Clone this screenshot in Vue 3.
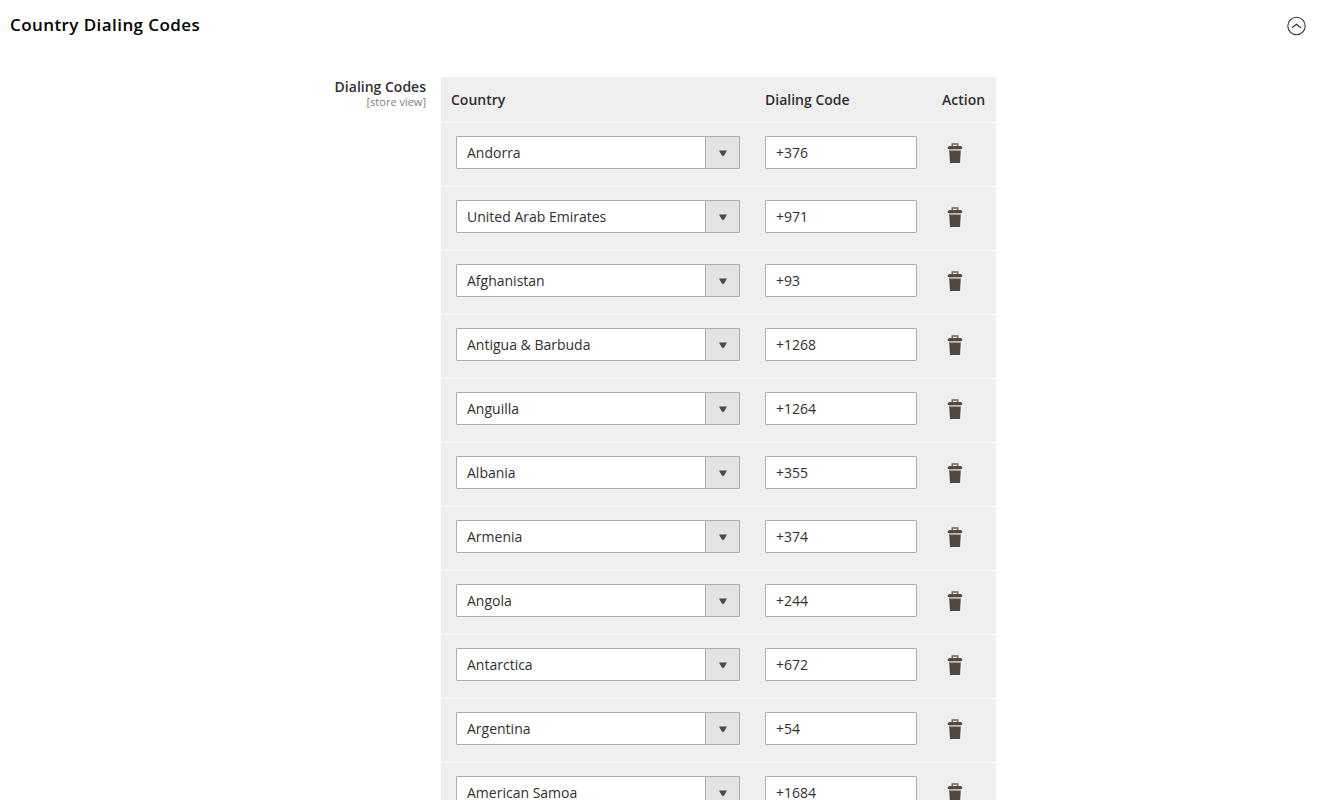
<script setup>
import { ref } from 'vue'

const open = ref(true)

const rows = ref([
  { country: 'Andorra', code: '+376' },
  { country: 'United Arab Emirates', code: '+971' },
  { country: 'Afghanistan', code: '+93' },
  { country: 'Antigua & Barbuda', code: '+1268' },
  { country: 'Anguilla', code: '+1264' },
  { country: 'Albania', code: '+355' },
  { country: 'Armenia', code: '+374' },
  { country: 'Angola', code: '+244' },
  { country: 'Antarctica', code: '+672' },
  { country: 'Argentina', code: '+54' },
  { country: 'American Samoa', code: '+1684' }
])

const countries = rows.value.map((row) => row.country)

function removeRow(index) {
  rows.value.splice(index, 1)
}
</script>

<template>
  <section class="section">
    <header class="section-head">
      <h2 class="section-title">Country Dialing Codes</h2>
      <button
        class="toggle"
        type="button"
        aria-label="Toggle section"
        :aria-expanded="open"
        @click="open = !open"
      >
        <svg width="20" height="22" viewBox="0 0 20 22" fill="none" stroke="#333">
          <circle cx="9.5" cy="12" r="8.7" stroke-width="1.1" />
          <path d="M5 13.7 9.5 10.2l4.5 3.5" stroke-width="1.3" />
        </svg>
      </button>
    </header>

    <div v-if="open" class="field">
      <div id="codes-label" class="field-label">
        <span class="label-text">Dialing Codes</span>
        <span class="label-scope">[store view]</span>
      </div>

      <table class="codes" aria-labelledby="codes-label">
        <thead>
          <tr>
            <th class="col-country" scope="col">Country</th>
            <th class="col-code" scope="col">Dialing Code</th>
            <th class="col-action" scope="col">Action</th>
          </tr>
        </thead>
        <tbody>
          <tr v-for="(row, index) in rows" :key="row.country">
            <td class="cell-country">
              <div class="select">
                <select v-model="row.country" :aria-label="'Country ' + (index + 1)">
                  <option v-for="name in countries" :key="name">{{ name }}</option>
                </select>
                <span class="select-arrow">
                  <svg width="8" height="6" viewBox="0 0 8 6"><path d="M0 .5h8L5 5.7H3z" fill="#514943" /></svg>
                </span>
              </div>
            </td>
            <td>
              <input v-model="row.code" class="code" type="text" :aria-label="'Dialing code ' + (index + 1)" />
            </td>
            <td>
              <button class="delete" type="button" :aria-label="'Delete row ' + (index + 1)" @click="removeRow(index)">
                <svg width="16" height="20" viewBox="0 0 16 20">
                  <path d="M5.3 3.4V1h5.4v2.4" fill="none" stroke="#6b645f" stroke-width="1.6" />
                  <path d="M2 6h12v2H2z" fill="#bdbab8" />
                  <path d="M2 3h12l1.2 1.4V6H.8V4.4z" fill="#514943" />
                  <path d="M2.2 7.7h11.6L13 20H3z" fill="#514943" />
                </svg>
              </button>
            </td>
          </tr>
        </tbody>
      </table>
    </div>
  </section>
</template>

<style>
body {
  margin: 0;
  background: #fff;
}
</style>

<style scoped>
.section {
  font-family: "Open Sans", "Noto Sans", sans-serif;
  font-size: 14px;
  line-height: 19px;
  color: #303030;
}

.section-head {
  display: flex;
  align-items: center;
  justify-content: space-between;
  padding: 13px 19px 0 10px;
}

.section-title {
  margin: 0;
  font-size: 17px;
  line-height: 24px;
  font-weight: 600;
  letter-spacing: 0.025em;
  color: #000;
}

.toggle,
.delete {
  display: block;
  padding: 0;
  border: 0;
  background: none;
  cursor: pointer;
}

.toggle svg,
.delete svg,
.select-arrow svg {
  display: block;
}

.field {
  display: grid;
  grid-template-columns: 426fr 555fr 315fr;
  column-gap: 15px;
  align-items: start;
  margin-top: 40px;
}

.field-label {
  display: flex;
  flex-direction: column;
  align-items: flex-end;
}

.label-text {
  font-weight: 600;
}

.label-scope {
  font-size: 11px;
  line-height: 12px;
  color: #808080;
}

.codes {
  width: 100%;
  table-layout: fixed;
  border-collapse: separate;
  border-spacing: 0;
  background: #efefef;
}

th {
  box-sizing: border-box;
  height: 46px;
  padding: 0 10px;
  border-bottom: 1px solid #fff;
  font-weight: 600;
  text-align: left;
}

.col-code {
  width: 177px;
}

.col-action {
  width: 64px;
}

td {
  box-sizing: border-box;
  height: 64px;
  padding: 13px 10px 17px;
  border-bottom: 1px solid #fff;
  vertical-align: top;
}

.cell-country {
  padding-left: 15px;
  padding-right: 15px;
}

.select {
  position: relative;
}

.select select,
.code {
  display: block;
  box-sizing: border-box;
  width: 100%;
  height: 33px;
  margin: 0;
  padding: 0 10px;
  border: 1px solid #adadad;
  border-radius: 1px;
  background: #fff;
  color: #303030;
  font: inherit;
}

.select select {
  appearance: none;
  padding-right: 44px;
}

.code {
  width: 152px;
}

.select-arrow {
  position: absolute;
  top: 0;
  right: 0;
  bottom: 0;
  display: flex;
  align-items: center;
  justify-content: center;
  width: 33px;
  border: 1px solid #adadad;
  border-radius: 1px;
  background: #e3e3e3;
  pointer-events: none;
}

.delete {
  margin: 7px 0 0 5px;
}
</style>
